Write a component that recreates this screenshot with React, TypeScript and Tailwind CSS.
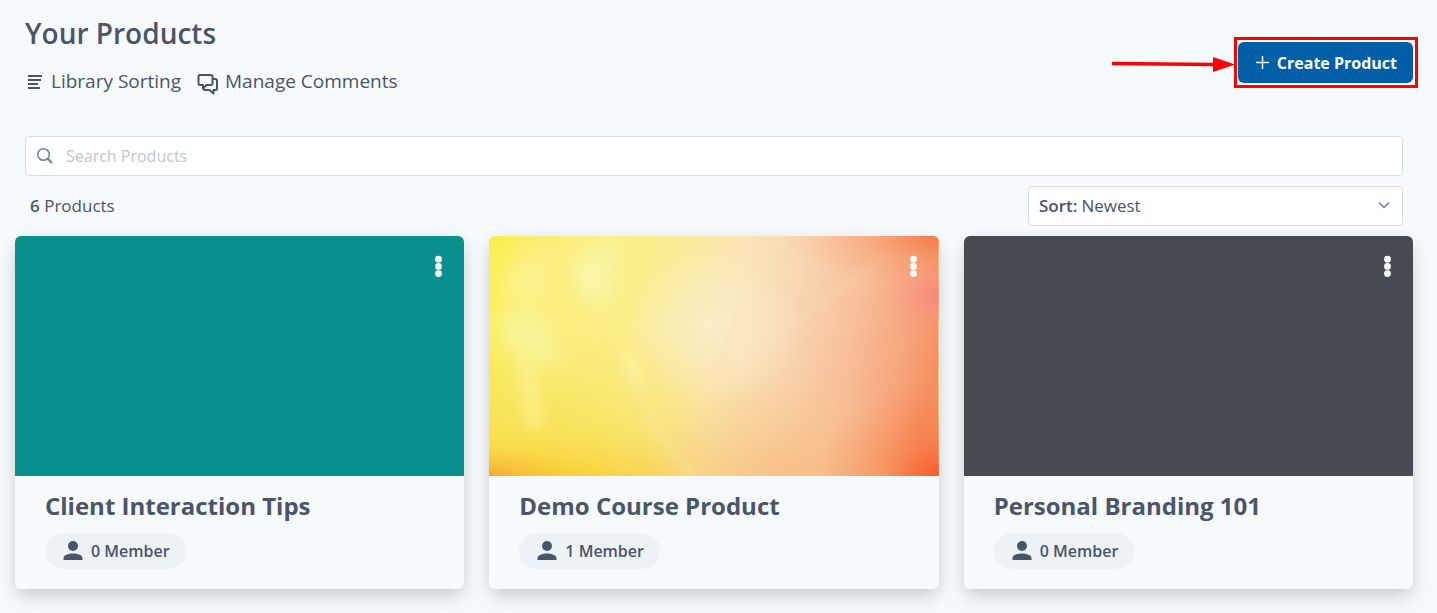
import React, { useState } from 'react';

interface Product {
  id: number;
  title: string;
  members: number;
  cover: string;
  artwork?: boolean;
}

const PRODUCTS: Product[] = [
  { id: 1, title: 'Client Interaction Tips', members: 0, cover: 'bg-[#0a8f8f]' },
  { id: 2, title: 'Demo Course Product', members: 1, cover: 'bg-[#fae49f]', artwork: true },
  { id: 3, title: 'Personal Branding 101', members: 0, cover: 'bg-[#464a51]' },
];

function SortLinesIcon() {
  return (
    <svg width="20" height="20" viewBox="0 0 20 20" fill="none" stroke="currentColor" strokeWidth="2" aria-hidden="true">
      <path d="M3 5h14M3 9h13M3 13h10M3 17h12" />
    </svg>
  );
}

function CommentsIcon() {
  return (
    <svg className="mt-1.5" width="22" height="22" viewBox="0 0 22 22" fill="none" stroke="currentColor" strokeWidth="2" strokeLinejoin="round" aria-hidden="true">
      <path d="M3 2h11a1.5 1.5 0 0 1 1.5 1.5v7A1.5 1.5 0 0 1 14 12H9.5L6 15.5V12H3a1.5 1.5 0 0 1-1.5-1.5v-7A1.5 1.5 0 0 1 3 2z" />
      <path d="M16 6h2.5a1.5 1.5 0 0 1 1.5 1.5v8a1.5 1.5 0 0 1-1.5 1.5H16.5v3.5L12.5 17H8a1.5 1.5 0 0 1-1.5-1.5" />
    </svg>
  );
}

function SearchIcon() {
  return (
    <svg className="shrink-0" width="18" height="18" viewBox="0 0 18 18" fill="none" stroke="#718096" aria-hidden="true">
      <circle cx="7.5" cy="7.5" r="5.8" strokeWidth="1.5" />
      <path d="M11.8 11.8l4.2 4.2" strokeWidth="2" />
    </svg>
  );
}

function PersonIcon() {
  return (
    <svg width="20" height="20" viewBox="0 0 20 20" fill="currentColor" aria-hidden="true">
      <circle cx="10" cy="5" r="5" />
      <path d="M0.5 19v-2c0-3 5-4.600 9.500-4.600s9.500 1.600 9.500 4.600v2z" />
    </svg>
  );
}

function CoverArtwork() {
  return (
    <svg className="h-full w-full" viewBox="0 0 450 240" preserveAspectRatio="none" aria-hidden="true">
      <defs>
        <linearGradient id="base" gradientUnits="userSpaceOnUse" x1="0" y1="80" x2="440" y2="170">
          <stop offset="0" stopColor="#faee58" />
          <stop offset="0.08" stopColor="#faee78" />
          <stop offset="0.3" stopColor="#faee88" />
          <stop offset="0.42" stopColor="#faeaa0" />
          <stop offset="0.53" stopColor="#fae4b8" />
          <stop offset="0.66" stopColor="#f9d6b4" />
          <stop offset="0.8" stopColor="#f8bf9a" />
          <stop offset="0.92" stopColor="#f7a57c" />
          <stop offset="1" stopColor="#f69060" />
        </linearGradient>
        <linearGradient id="floor" x1="0" y1="0" x2="0" y2="1">
          <stop offset="0.4" stopColor="#f8d838" stopOpacity="0" />
          <stop offset="0.8" stopColor="#f8d838" stopOpacity="0.5" />
          <stop offset="1" stopColor="#f8c828" stopOpacity="0.85" />
        </linearGradient>
        <linearGradient id="fade" x1="0" y1="0" x2="1" y2="0">
          <stop offset="0.15" stopColor="#fff" />
          <stop offset="0.35" stopColor="#bbb" />
          <stop offset="0.5" stopColor="#666" />
          <stop offset="0.8" stopColor="#000" />
        </linearGradient>
        <mask id="left">
          <rect width="450" height="240" fill="url(#fade)" />
        </mask>
        <radialGradient id="ember">
          <stop offset="0" stopColor="#f65424" stopOpacity="0.85" />
          <stop offset="0.4" stopColor="#f66c34" stopOpacity="0.4" />
          <stop offset="1" stopColor="#f68040" stopOpacity="0" />
        </radialGradient>
        <radialGradient id="apricot">
          <stop offset="0" stopColor="#f7b880" stopOpacity="0.7" />
          <stop offset="1" stopColor="#f7c890" stopOpacity="0" />
        </radialGradient>
        <radialGradient id="rose">
          <stop offset="0" stopColor="#f88080" stopOpacity="0.7" />
          <stop offset="1" stopColor="#f8a090" stopOpacity="0" />
        </radialGradient>
        <radialGradient id="cream">
          <stop offset="0" stopColor="#fcf0d0" stopOpacity="0.75" />
          <stop offset="1" stopColor="#fcf0d0" stopOpacity="0" />
        </radialGradient>
        <filter id="soft" x="-50%" y="-50%" width="200%" height="200%">
          <feGaussianBlur stdDeviation="10" />
        </filter>
        <filter id="softer" x="-50%" y="-50%" width="200%" height="200%">
          <feGaussianBlur stdDeviation="5" />
        </filter>
      </defs>
      <rect width="450" height="240" fill="url(#base)" />
      <rect width="450" height="240" fill="url(#floor)" mask="url(#left)" />
      <ellipse cx="300" cy="245" rx="150" ry="110" fill="url(#apricot)" />
      <ellipse cx="225" cy="90" rx="90" ry="80" fill="url(#cream)" />
      <g fill="#fcfab8" filter="url(#soft)">
        <path d="M82 25L130 0L118 70L90 60Z" opacity="0.7" />
        <path d="M5 80L50 75L75 130L45 125L15 110Z" opacity="0.55" />
        <path d="M20 30L55 15L55 60L10 70Z" opacity="0.4" />
      </g>
      <g fill="#fcf8a8" filter="url(#softer)">
        <path d="M28 115L45 125L55 175L52 195L35 190Z" opacity="0.35" />
        <path d="M125 105L150 125L158 155L142 145Z" opacity="0.6" />
        <path d="M88 30L110 35L120 65L100 55Z" opacity="0.5" />
      </g>
      <g filter="url(#softer)" fill="none" strokeWidth="8">
        <path d="M135 130Q165 195 205 240" stroke="#faeca0" opacity="0.4" />
        <path d="M300 90Q340 60 400 20" stroke="#fbe4b8" opacity="0.2" />
        <path d="M255 65Q245 110 220 150" stroke="#f9dcae" opacity="0.4" />
      </g>
      <ellipse cx="450" cy="240" rx="120" ry="90" fill="url(#ember)" />
      <ellipse cx="445" cy="0" rx="150" ry="50" fill="url(#ember)" opacity="0.6" />
      <ellipse cx="450" cy="60" rx="60" ry="38" fill="url(#rose)" />
      <ellipse cx="0" cy="240" rx="80" ry="30" fill="url(#ember)" opacity="0.4" />
    </svg>
  );
}

function ProductCard({ product }: { product: Product }) {
  return (
    <article className="rounded-md shadow-[0_10px_20px_-3px_rgba(0,0,0,0.17),0_2px_14px_rgba(0,0,0,0.06)]">
      <div className={`relative h-60 overflow-hidden rounded-t-md ${product.cover}`}>
        {product.artwork && <CoverArtwork />}
        <button type="button" aria-label="Product options" className="absolute top-4 right-4 flex h-7 w-5 items-center justify-center">
          <svg width="8" height="22" viewBox="0 0 8 22" fill="#fff" aria-hidden="true">
            <circle cx="4.5" cy="4.2" r="3.4" />
            <circle cx="4.5" cy="11.4" r="3.4" />
            <circle cx="4.5" cy="18.6" r="3.4" />
          </svg>
        </button>
      </div>
      <div className="px-[30px] pt-3 pb-5">
        <h2 className="text-2xl leading-9 font-bold">{product.title}</h2>
        <div className="mt-[9px] flex h-9 w-fit items-center gap-2 rounded-full bg-[#edf2f7] pr-4 pl-[18px] text-base font-semibold">
          <PersonIcon />
          <span>{product.members} Member</span>
        </div>
      </div>
    </article>
  );
}

export default function App() {
  const [search, setSearch] = useState('');
  const [sort, setSort] = useState('newest');

  return (
    <main className="min-h-screen bg-[#f7fafc] pr-6 pb-6 pl-[15px] font-['Open_Sans',sans-serif] text-[#4a5568]">
      {/* Header */}
      <header className="flex items-start justify-between pt-[11px] pl-2.5">
        <div>
          <h1 className="text-[28px] leading-11 font-semibold">Your Products</h1>
          <nav className="mt-2 flex items-center gap-4 text-[19px] leading-9">
            <a href="#sorting" className="flex items-center gap-1.5">
              <SortLinesIcon />
              Library Sorting
            </a>
            <a href="#comments" className="flex items-center gap-1.5">
              <CommentsIcon />
              Manage Comments
            </a>
          </nav>
        </div>

        <div className="relative mt-[31px]">
          <button type="button" className="flex h-[41px] items-center gap-2 rounded-md bg-[#005fa6] pr-4 pl-[18px] text-base font-bold text-white">
            <svg width="13" height="13" viewBox="0 0 13 13" stroke="currentColor" strokeWidth="1.5" aria-hidden="true">
              <path d="M6.5 0v13M0 6.5h13" />
            </svg>
            Create Product
          </button>
          <div className="pointer-events-none absolute -top-[5px] -right-[5px] -bottom-[5px] -left-1 border-3 border-[#ff0000]" />
          <svg className="pointer-events-none absolute top-3 right-full mr-[3px]" width="123" height="20" viewBox="0 0 123 20" aria-hidden="true">
            <path d="M0 9.5L102 10.5" stroke="#ff0000" strokeWidth="3.5" />
            <path d="M101 3L123 10.5L101 18z" fill="#ff0000" />
          </svg>
        </div>
      </header>

      {/* Search and sort */}
      <section className="mt-[37px] px-2.5 text-[17px]">
        <label className="flex h-10 items-center gap-3 rounded-sm border border-[#dbdde1] bg-white px-2.5">
          <SearchIcon />
          <input
            type="text"
            aria-label="Search Products"
            placeholder="Search Products"
            value={search}
            onChange={(e) => setSearch(e.target.value)}
            className="min-w-0 flex-1 text-base outline-none placeholder:text-[#c2c7cf]"
          />
        </label>

        <div className="mt-2.5 flex items-center justify-between">
          <p className="pl-[5px]">
            <span className="font-semibold">6</span> Products
          </p>
          <div className="flex h-10 w-[375px] items-center gap-1 rounded-sm border border-[#dbdde1] bg-white px-2.5">
            <label htmlFor="sort" className="font-semibold">
              Sort:
            </label>
            <select id="sort" value={sort} onChange={(e) => setSort(e.target.value)} className="flex-1 appearance-none bg-transparent outline-none">
              <option value="newest">Newest</option>
              <option value="oldest">Oldest</option>
            </select>
            <svg width="16" height="16" viewBox="0 0 16 16" fill="none" stroke="#718096" strokeWidth="1.5" aria-hidden="true">
              <path d="M3 4.5l5 5L13 4.5" />
            </svg>
          </div>
        </div>
      </section>

      {/* Products */}
      <section className="mt-2.5 grid grid-cols-3 gap-[25px]">
        {PRODUCTS.map((product) => (
          <ProductCard key={product.id} product={product} />
        ))}
      </section>
    </main>
  );
}
